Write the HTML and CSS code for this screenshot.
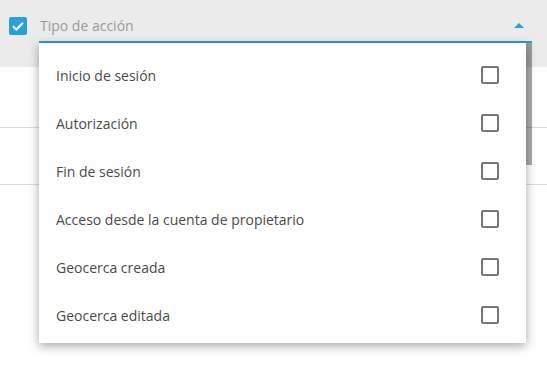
FILE: index.html
```html
<!DOCTYPE html>
<html lang="es">
<head>
  <meta charset="UTF-8" />
  <meta name="viewport" content="width=device-width, initial-scale=1.0"/>
  <title>Tipo de acción</title>
  <link rel="stylesheet" href="styles.css">
</head>
<body>
  <div class="filter-bar">
    <span class="check checked">
      <svg viewBox="0 0 18 18" width="18" height="18"><path d="M4 9.2l3.3 3.3L14 5.8" fill="none" stroke="#fff" stroke-width="2"/></svg>
    </span>
    <div class="field">
      <span class="placeholder">Tipo de acción</span>
      <span class="arrow"></span>
    </div>
  </div>
  <div class="table-row first"></div>
  <div class="table-row"></div>

  <!-- Menú desplegable -->
  <div class="dropdown">
    <ul class="menu">
      <li><span>Inicio de sesión</span><i class="box"></i></li>
      <li><span>Autorización</span><i class="box"></i></li>
      <li><span>Fin de sesión</span><i class="box"></i></li>
      <li><span>Acceso desde la cuenta de propietario</span><i class="box"></i></li>
      <li><span>Geocerca creada</span><i class="box"></i></li>
      <li><span>Geocerca editada</span><i class="box"></i></li>
    </ul>
    <div class="scroll-track"><div class="scroll-thumb"></div></div>
  </div>
</body>
</html>
```

FILE: styles.css
```css
body {
  margin: 0;
  font-family: "Open Sans", Arial, sans-serif;
  background-color: #fff;
  position: relative;
  height: 366px;
  overflow: hidden;
}

.filter-bar {
  display: flex;
  align-items: flex-start;
  height: 67px;
  background-color: #ebebeb;
  padding: 0 15px 0 9px;
  box-sizing: border-box;
}

.check {
  width: 18px;
  height: 18px;
  margin-top: 17px;
  border-radius: 2px;
  flex-shrink: 0;
}

.check.checked {
  background-color: #29a0dc;
}

.check svg {
  display: block;
}

.field {
  flex: 1;
  display: flex;
  align-items: center;
  justify-content: space-between;
  height: 41px;
  margin-left: 12px;
  padding: 0 8px 0 1px;
  border-bottom: 2px solid #2a9fd8;
}

.placeholder {
  font-size: 14px;
  color: #9a9a9a;
  padding-top: 10px;
}

.arrow {
  width: 0;
  height: 0;
  border-left: 5px solid transparent;
  border-right: 5px solid transparent;
  border-bottom: 5px solid #2a9fd8;
  margin-top: 10px;
}

.table-row {
  height: 57px;
  border-bottom: 1px solid #dcdcdc;
  box-sizing: border-box;
}

.table-row.first {
  height: 61px;
}

.dropdown {
  position: absolute;
  left: 39px;
  top: 43px;
  width: 493px;
  height: 300px;
  display: flex;
}

.menu {
  flex: 1;
  margin: 0;
  padding: 8px 0;
  list-style: none;
  background-color: #fff;
  box-shadow: 0 3px 10px rgba(0, 0, 0, 0.35);
  overflow: hidden;
}

.menu li {
  display: flex;
  align-items: center;
  justify-content: space-between;
  height: 48px;
  padding: 0 27px 0 17px;
  font-size: 14px;
  color: #4a4a4a;
}

.box {
  width: 14px;
  height: 14px;
  border: 2px solid #777;
  border-radius: 2px;
}

.scroll-track {
  width: 6px;
}

.scroll-thumb {
  height: 122px;
  background-color: rgba(0, 0, 0, 0.33);
}
```
